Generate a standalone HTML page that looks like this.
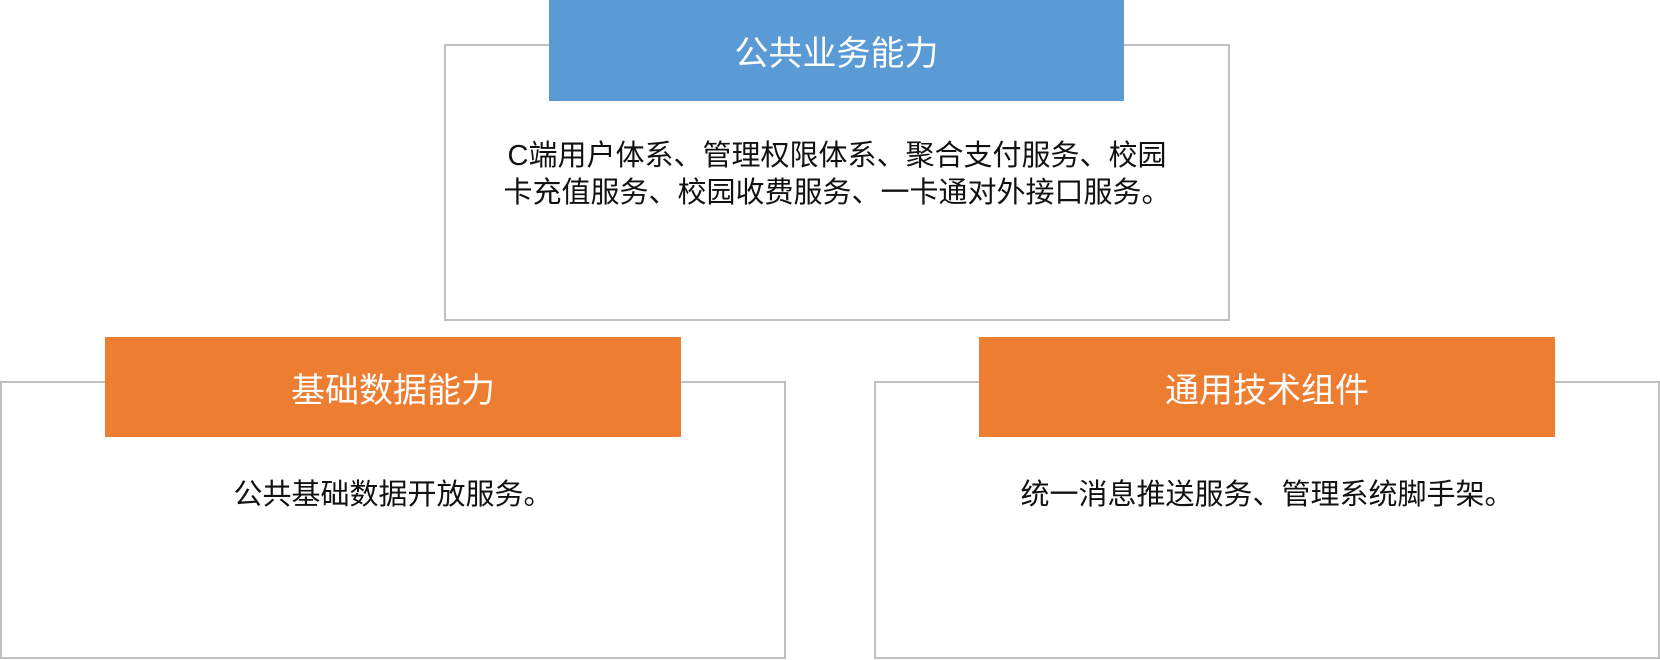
<!DOCTYPE html>
<html><head><meta charset="utf-8"><style>
body{margin:0;width:1660px;height:660px;background:#fff;position:relative;overflow:hidden;font-family:"Liberation Sans","Noto Sans CJK SC",sans-serif;}
.box{position:absolute;border:2px solid #c0c0c0;box-sizing:border-box;background:#fff}
.hd{position:absolute;color:#fff;font-size:34px;display:flex;align-items:center;justify-content:center}
.t{position:absolute;color:#111;font-size:29px;text-align:center;line-height:37px;white-space:nowrap}
</style></head><body>
<div class="box" style="left:444px;top:44px;width:786px;height:277px"></div>
<div class="hd" style="left:549px;top:0;width:575px;height:101px;background:#5b9bd5">公共业务能力</div>
<div class="t" style="left:444px;top:138px;width:786px">C端用户体系、管理权限体系、聚合支付服务、校园<br>卡充值服务、校园收费服务、一卡通对外接口服务。</div>

<div class="box" style="left:0;top:381px;width:786px;height:278px"></div>
<div class="hd" style="left:105px;top:337px;width:576px;height:100px;background:#ed7d31">基础数据能力</div>
<div class="t" style="left:0;top:477px;width:786px">公共基础数据开放服务。</div>

<div class="box" style="left:874px;top:381px;width:786px;height:278px"></div>
<div class="hd" style="left:979px;top:337px;width:576px;height:100px;background:#ed7d31">通用技术组件</div>
<div class="t" style="left:874px;top:477px;width:786px">统一消息推送服务、管理系统脚手架。</div>
</body></html>
